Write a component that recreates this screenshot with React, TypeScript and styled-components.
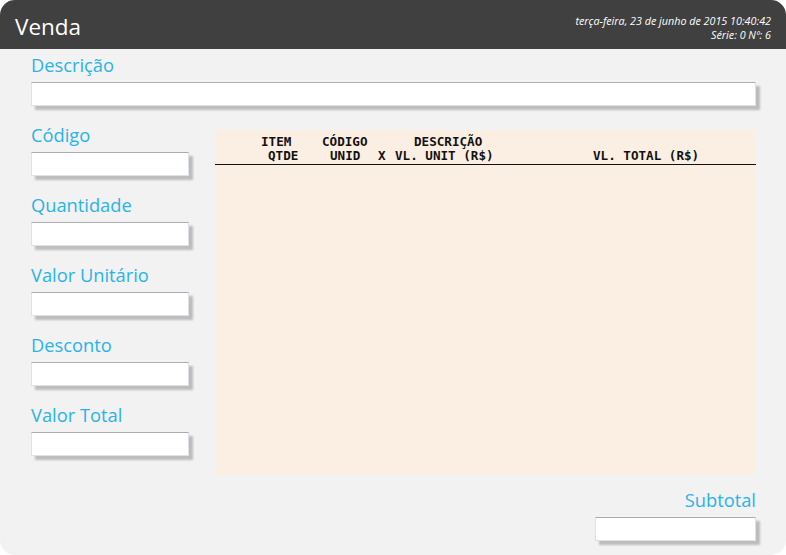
import type { FC } from 'react'
import styled, { createGlobalStyle } from 'styled-components'

const GlobalStyle = createGlobalStyle`
  html, body {
    margin: 0;
    padding: 0;
    background: #ffffff;
  }
  * {
    box-sizing: border-box;
  }
`

const leftFields = ['Código', 'Quantidade', 'Valor Unitário', 'Desconto', 'Valor Total']

const App: FC = () => {
  return (
    <>
      <GlobalStyle />
      <Window>
        <Header>
          <Title>Venda</Title>
          <Meta>
            <div>terça-feira, 23 de junho de 2015 10:40:42</div>
            <div>Série: 0 Nº: 6</div>
          </Meta>
        </Header>
        <Body>
          <Field>
            <Label>Descrição</Label>
            <TextBox />
          </Field>
          <MiddleRow>
            <LeftColumn>
              {leftFields.map((label) => (
                <Field key={label}>
                  <Label>{label}</Label>
                  <TextBox $width={158} />
                </Field>
              ))}
            </LeftColumn>
            <ItemsPanel>
              <ItemsHeader>
                <HeaderLine $indent={46}>
                  <Col $w={61}>ITEM</Col>
                  <Col $w={92}>CÓDIGO</Col>
                  <Col>DESCRIÇÃO</Col>
                </HeaderLine>
                <HeaderLine $indent={53}>
                  <Col $w={62}>QTDE</Col>
                  <Col $w={48}>UNID</Col>
                  <Col $w={17}>X</Col>
                  <Col $w={198}>VL. UNIT (R$)</Col>
                  <Col>VL. TOTAL (R$)</Col>
                </HeaderLine>
              </ItemsHeader>
            </ItemsPanel>
          </MiddleRow>
          <SubtotalField>
            <Label>Subtotal</Label>
            <TextBox $width={161} />
          </SubtotalField>
        </Body>
      </Window>
    </>
  )
}

const Window = styled.div`
  width: 786px;
  height: 555px;
  border-radius: 15px;
  overflow: hidden;
  background: #f2f2f2;
  display: flex;
  flex-direction: column;
`

const Header = styled.div`
  height: 49px;
  background: #404040;
  display: flex;
  justify-content: space-between;
  align-items: flex-end;
  padding: 0 15px 7px 15px;
  color: #ffffff;
`

const Title = styled.div`
  font-family: 'Open Sans', sans-serif;
  font-size: 22.5px;
  line-height: 30px;
`

const Meta = styled.div`
  font-family: 'Open Sans', sans-serif;
  font-style: italic;
  font-size: 10.75px;
  line-height: 14px;
  text-align: right;
`

const Body = styled.div`
  flex: 1;
  padding: 4px 30px 0 31px;
  display: flex;
  flex-direction: column;
  gap: 17px;
`

const Field = styled.div`
  display: flex;
  flex-direction: column;
  gap: 5px;
`

const Label = styled.div`
  font-family: 'Open Sans', sans-serif;
  font-size: 18.3px;
  line-height: 24px;
  color: #29b4e8;
`

const TextBox = styled.div<{ $width?: number }>`
  width: ${({ $width }) => ($width ? `${$width}px` : '100%')};
  height: 24px;
  background: #ffffff;
  border: 1px solid #dde2e8;
  border-top-color: #abadb3;
  box-shadow: 4px 4px 2px rgba(0, 0, 0, 0.22);
`

const MiddleRow = styled.div`
  display: flex;
  gap: 26px;
  align-items: flex-start;
`

const LeftColumn = styled.div`
  display: flex;
  flex-direction: column;
  gap: 17px;
`

const ItemsPanel = styled.div`
  flex: 1;
  margin-top: 7px;
  height: 345px;
  background: #fbefe3;
`

const ItemsHeader = styled.div`
  padding-top: 5px;
  padding-bottom: 1px;
  border-bottom: 1px solid #111111;
`

const HeaderLine = styled.div<{ $indent: number }>`
  display: flex;
  padding-left: ${({ $indent }) => $indent}px;
  font-family: 'DejaVu Sans Mono', 'Liberation Mono', monospace;
  font-weight: bold;
  font-size: 12.6px;
  line-height: 14px;
  color: #111111;
  white-space: pre;
`

const Col = styled.span<{ $w?: number }>`
  flex: ${({ $w }) => ($w ? `0 0 ${$w}px` : '1')};
`

const SubtotalField = styled(Field)`
  margin-top: -4px;
  align-items: flex-end;
`

export default App
